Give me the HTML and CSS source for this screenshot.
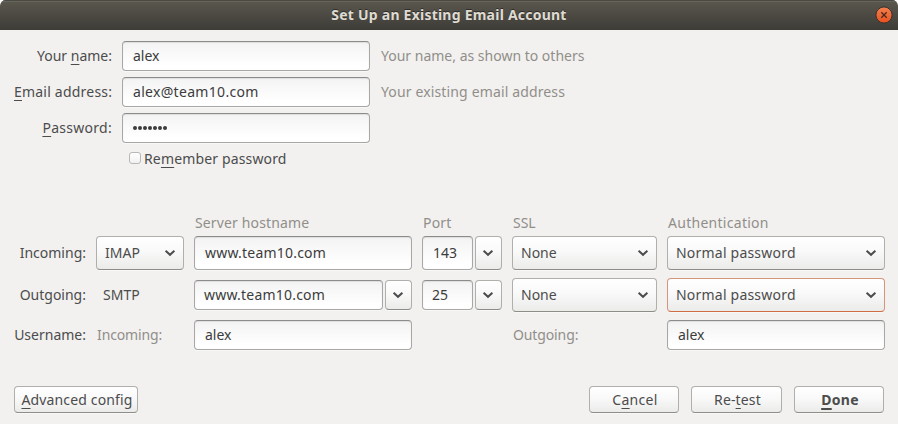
FILE: index.html
```html
<!DOCTYPE html>
<html lang="en">
<head>
<meta charset="utf-8">
<title>Set Up an Existing Email Account</title>
<link rel="stylesheet" href="styles.css">
</head>
<body>
<svg class="defs" width="0" height="0"><symbol id="chevron" viewBox="0 0 12 8"><path d="M1.6 1.7 6 5.8l4.4-4.1" fill="none" stroke="#4c4c4c" stroke-width="2"/></symbol></svg>
<div class="window">
  <header class="titlebar">
    <h1>Set Up an Existing Email Account</h1>
    <svg class="close" viewBox="0 0 18 18" width="18" height="18">
      <defs><linearGradient id="orange" x2="0" y2="1"><stop stop-color="#f4814f"/><stop offset="1" stop-color="#e9501f"/></linearGradient></defs>
      <circle cx="9" cy="9" r="8.1" fill="url(#orange)" stroke="#35332e" stroke-width="1"/>
      <path d="M6.3 6.3l5.4 5.4M11.7 6.3l-5.4 5.4" stroke="#4a2a1b" stroke-width="1.3"/>
    </svg>
  </header>
  <main>
    <section class="account">
      <label>Your <u>n</u>ame:</label><div class="field">alex</div><span class="hint">Your name, as shown to others</span>
      <label class="loose"><u>E</u>mail address:</label><div class="field address">alex@team10.com</div><span class="hint wide">Your existing email address</span>
      <label class="looser"><u>P</u>assword:</label><div class="field dots"><i></i><i></i><i></i><i></i><i></i><i></i><i></i></div><span></span>
    </section>
    <div class="remember"><span class="check"></span><span>Re<u>m</u>ember password</span></div>
    <section class="servers">
      <span></span><span></span><span class="hint head wide">Server hostname</span><span class="hint head loose">Port</span><span class="hint head">SSL</span><span class="hint head looser">Authentication</span>

      <label>Incoming:</label>
      <div class="select"><span>IMAP</span><svg><use href="#chevron"/></svg></div>
      <div class="field tall loose">www.team10.com</div>
      <div class="combo tall"><div class="field">143</div><div class="drop"><svg><use href="#chevron"/></svg></div></div>
      <div class="select"><span>None</span><svg><use href="#chevron"/></svg></div>
      <div class="select"><span class="loose">Normal password</span><svg><use href="#chevron"/></svg></div>

      <label>Outgoing:</label>
      <span class="protocol">SMTP</span>
      <div class="combo"><div class="field loose">www.team10.com</div><div class="drop"><svg><use href="#chevron"/></svg></div></div>
      <div class="combo"><div class="field">25</div><div class="drop"><svg><use href="#chevron"/></svg></div></div>
      <div class="select"><span>None</span><svg><use href="#chevron"/></svg></div>
      <div class="select focused"><span class="loose">Normal password</span><svg><use href="#chevron"/></svg></div>

      <label>Username:</label>
      <span class="hint user">Incoming:</span>
      <div class="field">alex</div>
      <span></span>
      <span class="hint user">Outgoing:</span>
      <div class="field">alex</div>
    </section>
  </main>
  <footer>
    <div class="button advanced"><span><u>A</u>dvanced config</span></div>
    <div class="button cancel"><span>C<u>a</u>ncel</span></div>
    <div class="button retest"><span>Re-<u>t</u>est</span></div>
    <div class="button done"><span><u>D</u>one</span></div>
  </footer>
</div>
</body>
</html>
```
FILE: styles.css
```css
* { box-sizing: border-box; }
body { margin: 0; background: #fff; color: #4c4c4c; font: 14px/20px "Noto Sans", "Open Sans", sans-serif; white-space: nowrap; }
.defs { position: absolute; }
.window { width: 898px; height: 424px; display: flex; flex-direction: column; background: #f2f1f0; border-radius: 6px 6px 0 0; overflow: hidden; }
.titlebar { height: 30px; flex: none; display: grid; grid-template-columns: 23px 1fr 23px; align-items: center; background: linear-gradient(#5b584f, #3e3c37); box-shadow: inset 0 1px #4b4943, inset 0 2px #68655b; }
h1 { grid-column: 2; margin: 0; text-align: center; font-size: 14px; line-height: 20px; font-weight: 700; letter-spacing: .23px; color: #dfdbd2; text-shadow: 0 -1px #2d2c28; }
main { padding: 11px 13px 0 14px; }
u { text-decoration: underline; text-decoration-thickness: 1px; text-underline-offset: 3px; text-decoration-skip-ink: none; }
label { text-align: right; }
.hint { color: #918e89; }
.wide { letter-spacing: .14px; }
.loose { letter-spacing: .21px; }
.looser { letter-spacing: .28px; }
.account { display: grid; grid-template-columns: 98px 248px 1fr; column-gap: 10px; row-gap: 6px; align-items: center; }
.account .hint { padding-left: 1px; }
.field { height: 30px; border: 1px solid #a8a7a5; border-top-color: #8b8b89; border-radius: 4px; padding: 0 10px; display: flex; align-items: center; color: #3c3c3c; background: linear-gradient(#f3f3f3, #fff 85%); box-shadow: inset 0 1px 1px #dedede, 0 1px #f8f8f7; }
.address { letter-spacing: .31px; }
.dots { gap: 1px; }
.dots i { width: 4px; height: 4px; border-radius: 50%; background: #3c3c3c; }
.remember { display: flex; align-items: center; height: 20px; margin: 6px 0 0 115px; gap: 3px; letter-spacing: .15px; }
.check { width: 12px; height: 12px; border: 1px solid #b9b8b6; border-radius: 3px; background: linear-gradient(#fff, #f1f1f1); margin-top: -2px; }
.servers { display: grid; grid-template-columns: 72px 88px 218px 80px 145px 218px; grid-template-rows: 20px 34px 34px 30px; column-gap: 10px; row-gap: 8px; align-items: center; margin-top: 39px; }
.head { padding-left: 1px; margin: 5px 0 -5px; }
.field.tall, .tall .field, .tall .drop { height: 34px; }
.combo { display: flex; gap: 2px; }
.combo .field { flex: 1; padding-left: 9px; }
.combo.tall .field { padding-left: 10px; padding-right: 0; }
.select, .drop, .button { border: 1px solid #b0afac; border-bottom-color: #8e8d8a; border-radius: 4px; background: linear-gradient(#fff, #f9f9f9 45%, #ebebea); box-shadow: 0 1px #f8f8f7; display: flex; align-items: center; }
.select { height: 34px; justify-content: space-between; padding: 0 7px 0 8px; }
.focused { border-color: #d5957b; border-bottom-color: #d16d43; }
.drop { width: 27px; height: 30px; justify-content: center; padding-right: 1px; }
.select svg, .drop svg { width: 12px; height: 8px; }
.protocol { padding-left: 7px; }
.user { padding-left: 1px; letter-spacing: -.12px; }
footer { display: flex; margin: 36px 14px 0; }
.button { height: 27px; justify-content: center; letter-spacing: .15px; padding-left: 2px; }
.advanced { width: 124px; margin-right: auto; }
.cancel { width: 90px; margin-right: 12px; letter-spacing: .3px; }
.retest { width: 91px; margin-right: 12px; }
.done { width: 90px; font-weight: 700; letter-spacing: .3px; }
.done u { text-decoration-thickness: 2px; }
```
